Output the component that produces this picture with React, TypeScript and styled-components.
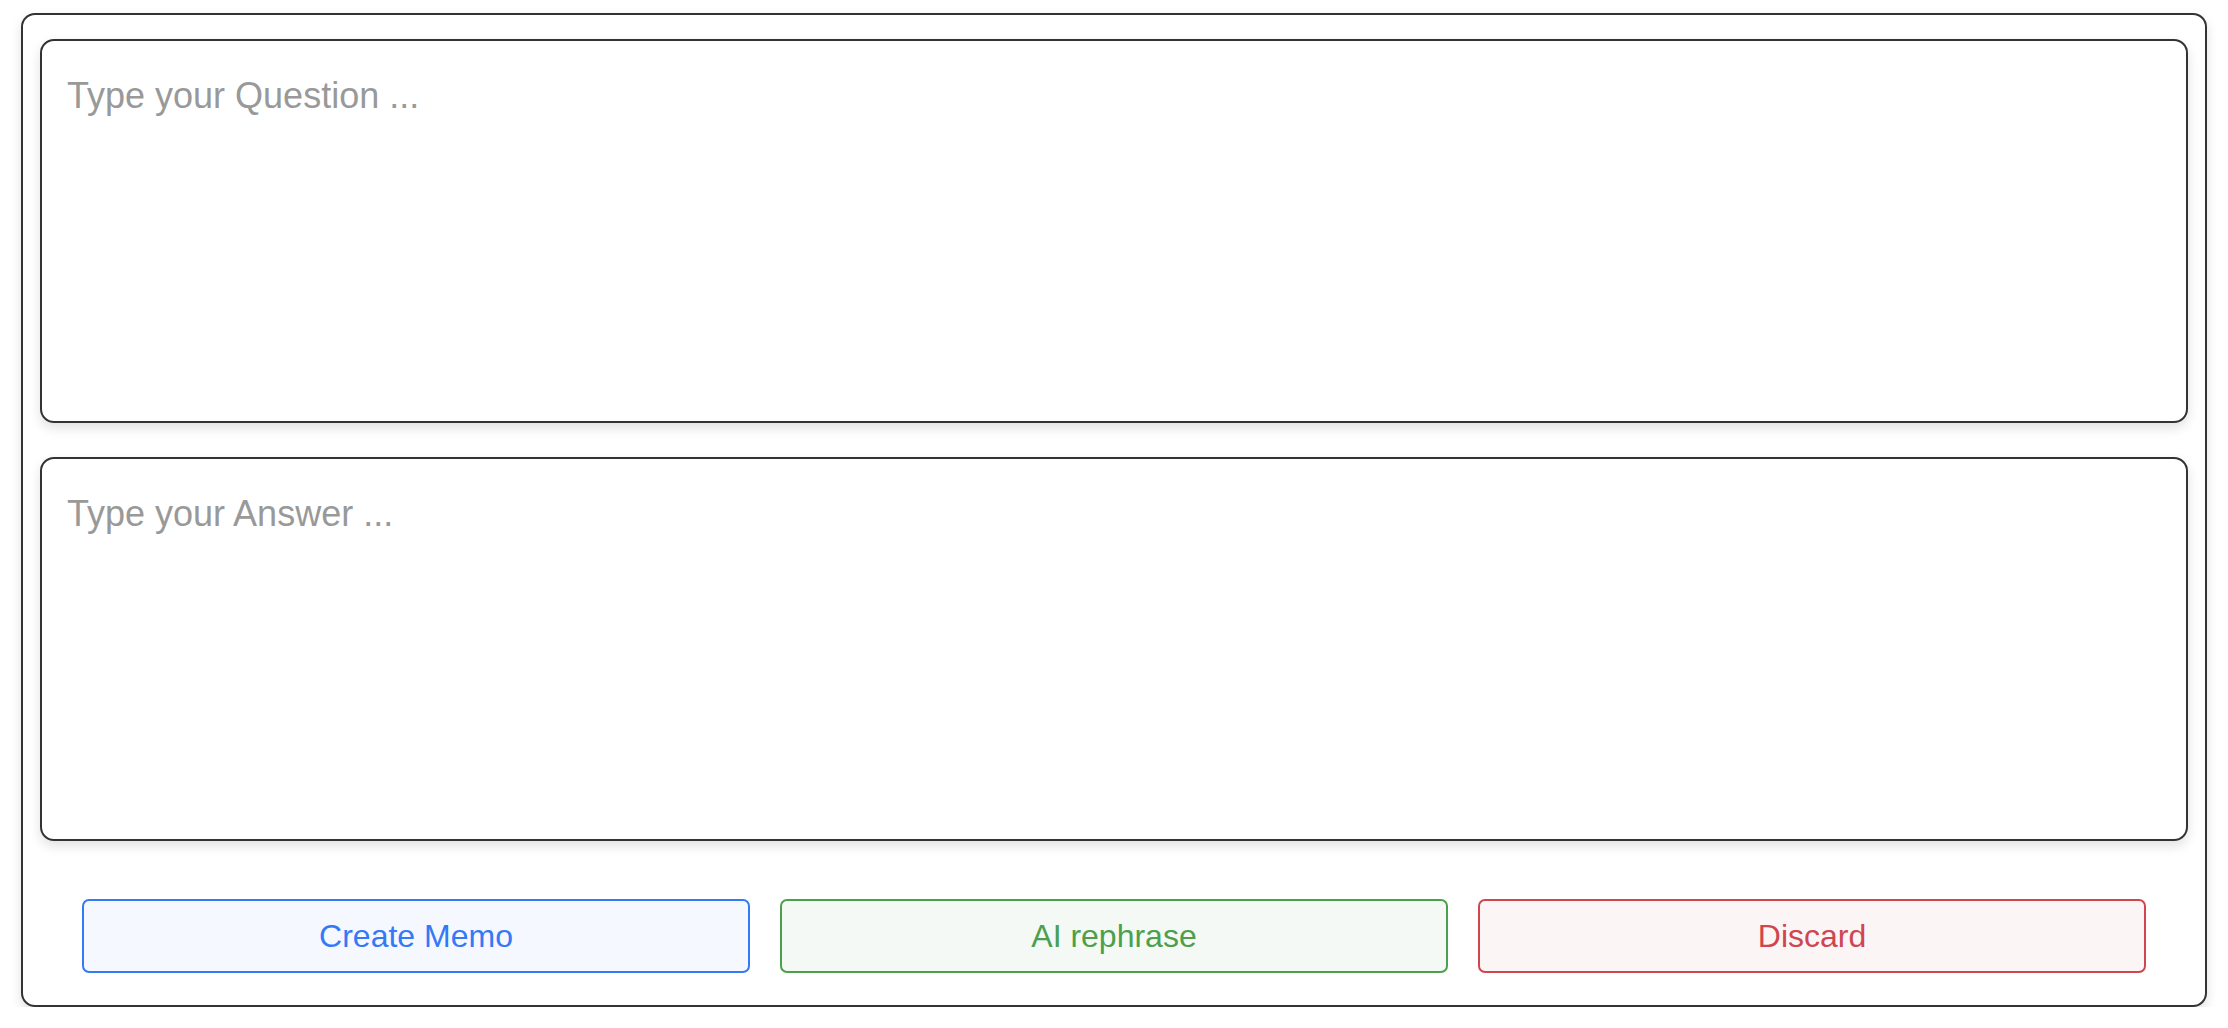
import styled, { createGlobalStyle } from "styled-components";

const GlobalStyle = createGlobalStyle`
	html, body {
		margin: 0;
		padding: 0;
		background: #ffffff;
	}
	body {
		font-family: "Liberation Sans", Arial, sans-serif;
	}
`;

type Tone = "blue" | "green" | "red";

const tones: Record<Tone, { fg: string; bg: string }> = {
	blue: { fg: "#3479f6", bg: "#f5f8ff" },
	green: { fg: "#4ba04c", bg: "#f4f9f5" },
	red: { fg: "#cf4650", bg: "#fbf5f6" },
};

const Card = styled.div`
	margin: 13px 21px 0;
	box-sizing: border-box;
	border: 2px solid #333333;
	border-radius: 14px;
	padding: 24px 17px 32px;
	background: #ffffff;
	box-shadow: 0 5px 12px rgba(0, 0, 0, 0.12);
	display: flex;
	flex-direction: column;
`;

const Fields = styled.div`
	display: flex;
	flex-direction: column;
	gap: 34px;
`;

const Field = styled.textarea`
	display: block;
	width: 100%;
	height: 384px;
	box-sizing: border-box;
	border: 2px solid #333333;
	border-radius: 14px;
	padding: 33px 25px;
	font-family: "Liberation Sans", Arial, sans-serif;
	font-size: 36px;
	line-height: 1.2;
	color: #222222;
	background: #ffffff;
	box-shadow: 0 5px 12px rgba(0, 0, 0, 0.12);
	resize: none;
	outline: none;

	&::placeholder {
		color: #999999;
	}
`;

const Actions = styled.div`
	display: grid;
	grid-template-columns: repeat(3, 1fr);
	gap: 30px;
	padding: 0 42px;
	margin-top: 58px;
`;

const ActionButton = styled.button<{ $tone: Tone }>`
	height: 74px;
	box-sizing: border-box;
	border: 2px solid ${(p) => tones[p.$tone].fg};
	border-radius: 7px;
	background: ${(p) => tones[p.$tone].bg};
	color: ${(p) => tones[p.$tone].fg};
	font-family: "Liberation Sans", Arial, sans-serif;
	font-size: 32px;
	cursor: pointer;
	display: flex;
	align-items: center;
	justify-content: center;
`;

export default function App() {
	return (
		<>
			<GlobalStyle />
			<Card>
				<Fields>
					<Field placeholder="Type your Question ..." />
					<Field placeholder="Type your Answer ..." />
				</Fields>
				<Actions>
					<ActionButton $tone="blue">Create Memo</ActionButton>
					<ActionButton $tone="green">AI rephrase</ActionButton>
					<ActionButton $tone="red">Discard</ActionButton>
				</Actions>
			</Card>
		</>
	);
}
